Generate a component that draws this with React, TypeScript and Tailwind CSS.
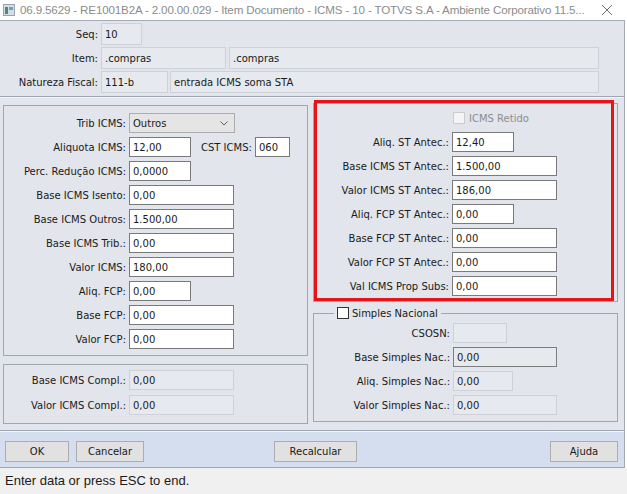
import React from "react";

const ui = "font-['DejaVu_Sans',sans-serif] text-[10px] text-[#1a1a1a]";

function Box({ value, w, disabled, h = "h-[20px]" }: { value: string; w: string; disabled?: boolean; h?: string }) {
  return (
    <div
      className={`${h} ${w} flex items-center pl-[3px] border ${
        disabled ? "bg-[#e6e9ee] border-[#ced2d8]" : "bg-white border-[#7a7a7a]"
      }`}
    >
      {value}
    </div>
  );
}

function Row({ label, lw, children }: { label: string; lw: string; children: React.ReactNode }) {
  return (
    <div className="flex items-center">
      <div className={`${lw} text-right pr-[3px] whitespace-nowrap`}>{label}</div>
      {children}
    </div>
  );
}

export default function App() {
  return (
    <div className={`w-[627px] h-[494px] flex flex-col bg-white overflow-hidden ${ui}`}>
      {/* title bar */}
      <div className="h-[20px] flex items-center bg-white">
        <svg width="12" height="12" viewBox="0 0 12 12" className="ml-[3px] mr-[5px] shrink-0">
          <rect x="0.5" y="0.5" width="11" height="11" fill="#d9dde2" stroke="#9aa3ad" />
          <rect x="2" y="3" width="3" height="7" fill="#3f8f7a" />
          <rect x="6" y="3" width="4" height="3" fill="#6aa3c9" />
        </svg>
        <div className="flex-1 whitespace-nowrap overflow-hidden font-['Liberation_Sans',sans-serif] text-[11.6px] text-[#8c8c8c] tracking-[-0.15px]">
          06.9.5629 - RE1001B2A - 2.00.00.029 - Item Documento - ICMS - 10 - TOTVS S.A - Ambiente Corporativo 11.5...
        </div>
        <svg width="12" height="12" viewBox="0 0 12 12" className="ml-[6px] mr-[14px] shrink-0">
          <path d="M1 1 L11 11 M11 1 L1 11" stroke="#707070" strokeWidth="1" />
        </svg>
      </div>

      {/* window body */}
      <div className="w-[625px] flex flex-col bg-[#e2e5eb] border-t border-r border-[#a3abb6]">
        {/* header */}
        <div className="flex flex-col gap-[2px] pt-[2px] pb-[3px]">
          <Row label="Seq:" lw="w-[101px]">
            <Box value="10" w="w-[41px]" h="h-[22px]" disabled />
          </Row>
          <Row label="Item:" lw="w-[101px]">
            <Box value=".compras" w="w-[125px]" h="h-[22px]" disabled />
            <div className="w-[3px]" />
            <Box value=".compras" w="w-[370px]" h="h-[22px]" disabled />
          </Row>
          <Row label="Natureza Fiscal:" lw="w-[101px]">
            <Box value="111-b" w="w-[67px]" h="h-[22px]" disabled />
            <div className="w-[2px]" />
            <Box value="entrada ICMS soma STA" w="w-[429px]" h="h-[22px]" disabled />
          </Row>
        </div>
        <div className="h-[2px] border-t border-[#9ea6b1] border-b border-b-[#f4f5f7]" />

        {/* content */}
        <div className="h-[332px] flex gap-[5px] pl-[3px]">
          {/* left column */}
          <div className="w-[305px] flex flex-col gap-[8px] pt-[7px]">
            <div className="h-[251px] border border-[#a0a7b2] flex flex-col gap-[4px] pt-[7px]">
              <Row label="Trib ICMS:" lw="w-[125px]">
                <div className="h-[20px] w-[106px] flex items-center justify-between pl-[3px] pr-[6px] bg-[#e5e5e5] border border-[#adadad]">
                  <span>Outros</span>
                  <svg width="8" height="5" viewBox="0 0 8 5">
                    <path d="M0.5 0.5 L4 4 L7.5 0.5" fill="none" stroke="#606060" strokeWidth="1" />
                  </svg>
                </div>
              </Row>
              <Row label="Aliquota ICMS:" lw="w-[125px]">
                <Box value="12,00" w="w-[62px]" />
                <div className="ml-[10px] mr-[3px] whitespace-nowrap">CST ICMS:</div>
                <Box value="060" w="w-[35px]" />
              </Row>
              <Row label="Perc. Redução ICMS:" lw="w-[125px]">
                <Box value="0,0000" w="w-[62px]" />
              </Row>
              <Row label="Base ICMS Isento:" lw="w-[125px]">
                <Box value="0,00" w="w-[105px]" />
              </Row>
              <Row label="Base ICMS Outros:" lw="w-[125px]">
                <Box value="1.500,00" w="w-[105px]" />
              </Row>
              <Row label="Base ICMS Trib.:" lw="w-[125px]">
                <Box value="0,00" w="w-[105px]" />
              </Row>
              <Row label="Valor ICMS:" lw="w-[125px]">
                <Box value="180,00" w="w-[105px]" />
              </Row>
              <Row label="Aliq. FCP:" lw="w-[125px]">
                <Box value="0,00" w="w-[62px]" />
              </Row>
              <Row label="Base FCP:" lw="w-[125px]">
                <Box value="0,00" w="w-[105px]" />
              </Row>
              <Row label="Valor FCP:" lw="w-[125px]">
                <Box value="0,00" w="w-[105px]" />
              </Row>
            </div>
            <div className="h-[60px] border border-[#a0a7b2] flex flex-col gap-[5px] pt-[5px]">
              <Row label="Base ICMS Compl.:" lw="w-[125px]">
                <Box value="0,00" w="w-[105px]" disabled />
              </Row>
              <Row label="Valor ICMS Compl.:" lw="w-[125px]">
                <Box value="0,00" w="w-[105px]" disabled />
              </Row>
            </div>
          </div>

          {/* right column */}
          <div className="relative w-[305px] flex flex-col pt-[5px]">
            <div className="h-[199px] border border-[#a0a7b2] flex flex-col gap-[4px] pt-[8px]">
              <div className="flex items-center h-[12px] mb-[4px] pl-[139px]">
                <div className="w-[12px] h-[12px] border border-[#cccccc] bg-[#f4f4f4]" />
                <span className="ml-[4px] text-[#8d8d8d]">ICMS Retido</span>
              </div>
              <Row label="Aliq. ST Antec.:" lw="w-[138px]">
                <Box value="12,40" w="w-[62px]" />
              </Row>
              <Row label="Base ICMS ST Antec.:" lw="w-[138px]">
                <Box value="1.500,00" w="w-[105px]" />
              </Row>
              <Row label="Valor ICMS ST Antec.:" lw="w-[138px]">
                <Box value="186,00" w="w-[105px]" />
              </Row>
              <Row label="Aliq. FCP ST Antec.:" lw="w-[138px]">
                <Box value="0,00" w="w-[62px]" />
              </Row>
              <Row label="Base FCP ST Antec.:" lw="w-[138px]">
                <Box value="0,00" w="w-[105px]" />
              </Row>
              <Row label="Valor FCP ST Antec.:" lw="w-[138px]">
                <Box value="0,00" w="w-[105px]" />
              </Row>
              <Row label="Val ICMS Prop Subs:" lw="w-[138px]">
                <Box value="0,00" w="w-[105px]" />
              </Row>
            </div>

            <fieldset className="mt-[5px] h-[115px] border border-[#a0a7b2] flex flex-col gap-[4px] pt-[4px]">
              <legend className="ml-[20px] px-[3px] flex items-center h-[12px]">
                <div className="w-[12px] h-[12px] border border-[#333333] bg-white" />
                <span className="ml-[3px]">Simples Nacional</span>
              </legend>
              <Row label="CSOSN:" lw="w-[139px]">
                <Box value="" w="w-[54px]" disabled />
              </Row>
              <Row label="Base Simples Nac.:" lw="w-[139px]">
                <div className="h-[20px] w-[104px] flex items-center pl-[3px] border border-[#7d7d7d] bg-[#e6e9ee]">0,00</div>
              </Row>
              <Row label="Aliq. Simples Nac.:" lw="w-[139px]">
                <Box value="0,00" w="w-[60px]" disabled />
              </Row>
              <Row label="Valor Simples Nac.:" lw="w-[139px]">
                <Box value="0,00" w="w-[104px]" disabled />
              </Row>
            </fieldset>

            {/* red highlight drawn on top of the screenshot */}
            <div className="absolute left-[1px] top-[2px] w-[300px] h-[201px] border-[3px] border-[#e5141b] pointer-events-none" />
          </div>
        </div>
        <div className="h-[2px] border-t border-[#9ea6b1] border-b border-b-[#f4f5f7]" />

        {/* button bar */}
        <div className="h-[36px] flex items-start pt-[9px] pl-[5px] pr-[6px] bg-[#d5deee] border-b border-[#9ea6b1]">
          <button className="h-[21px] w-[64px] bg-[#e1e1e1] border border-[#adadad]">OK</button>
          <button className="ml-[7px] h-[21px] w-[68px] bg-[#e1e1e1] border border-[#adadad]">Cancelar</button>
          <button className="ml-[130px] h-[21px] w-[83px] bg-[#e1e1e1] border border-[#adadad]">Recalcular</button>
          <button className="ml-auto h-[21px] w-[68px] bg-[#e1e1e1] border border-[#adadad]">Ajuda</button>
        </div>
      </div>

      {/* status bar */}
      <div className="flex-1 flex items-center pl-[5px] bg-[#f0f0f0] font-['Liberation_Sans',sans-serif] text-[13px] text-[#1a1a1a]">
        Enter data or press ESC to end.
      </div>
    </div>
  );
}
